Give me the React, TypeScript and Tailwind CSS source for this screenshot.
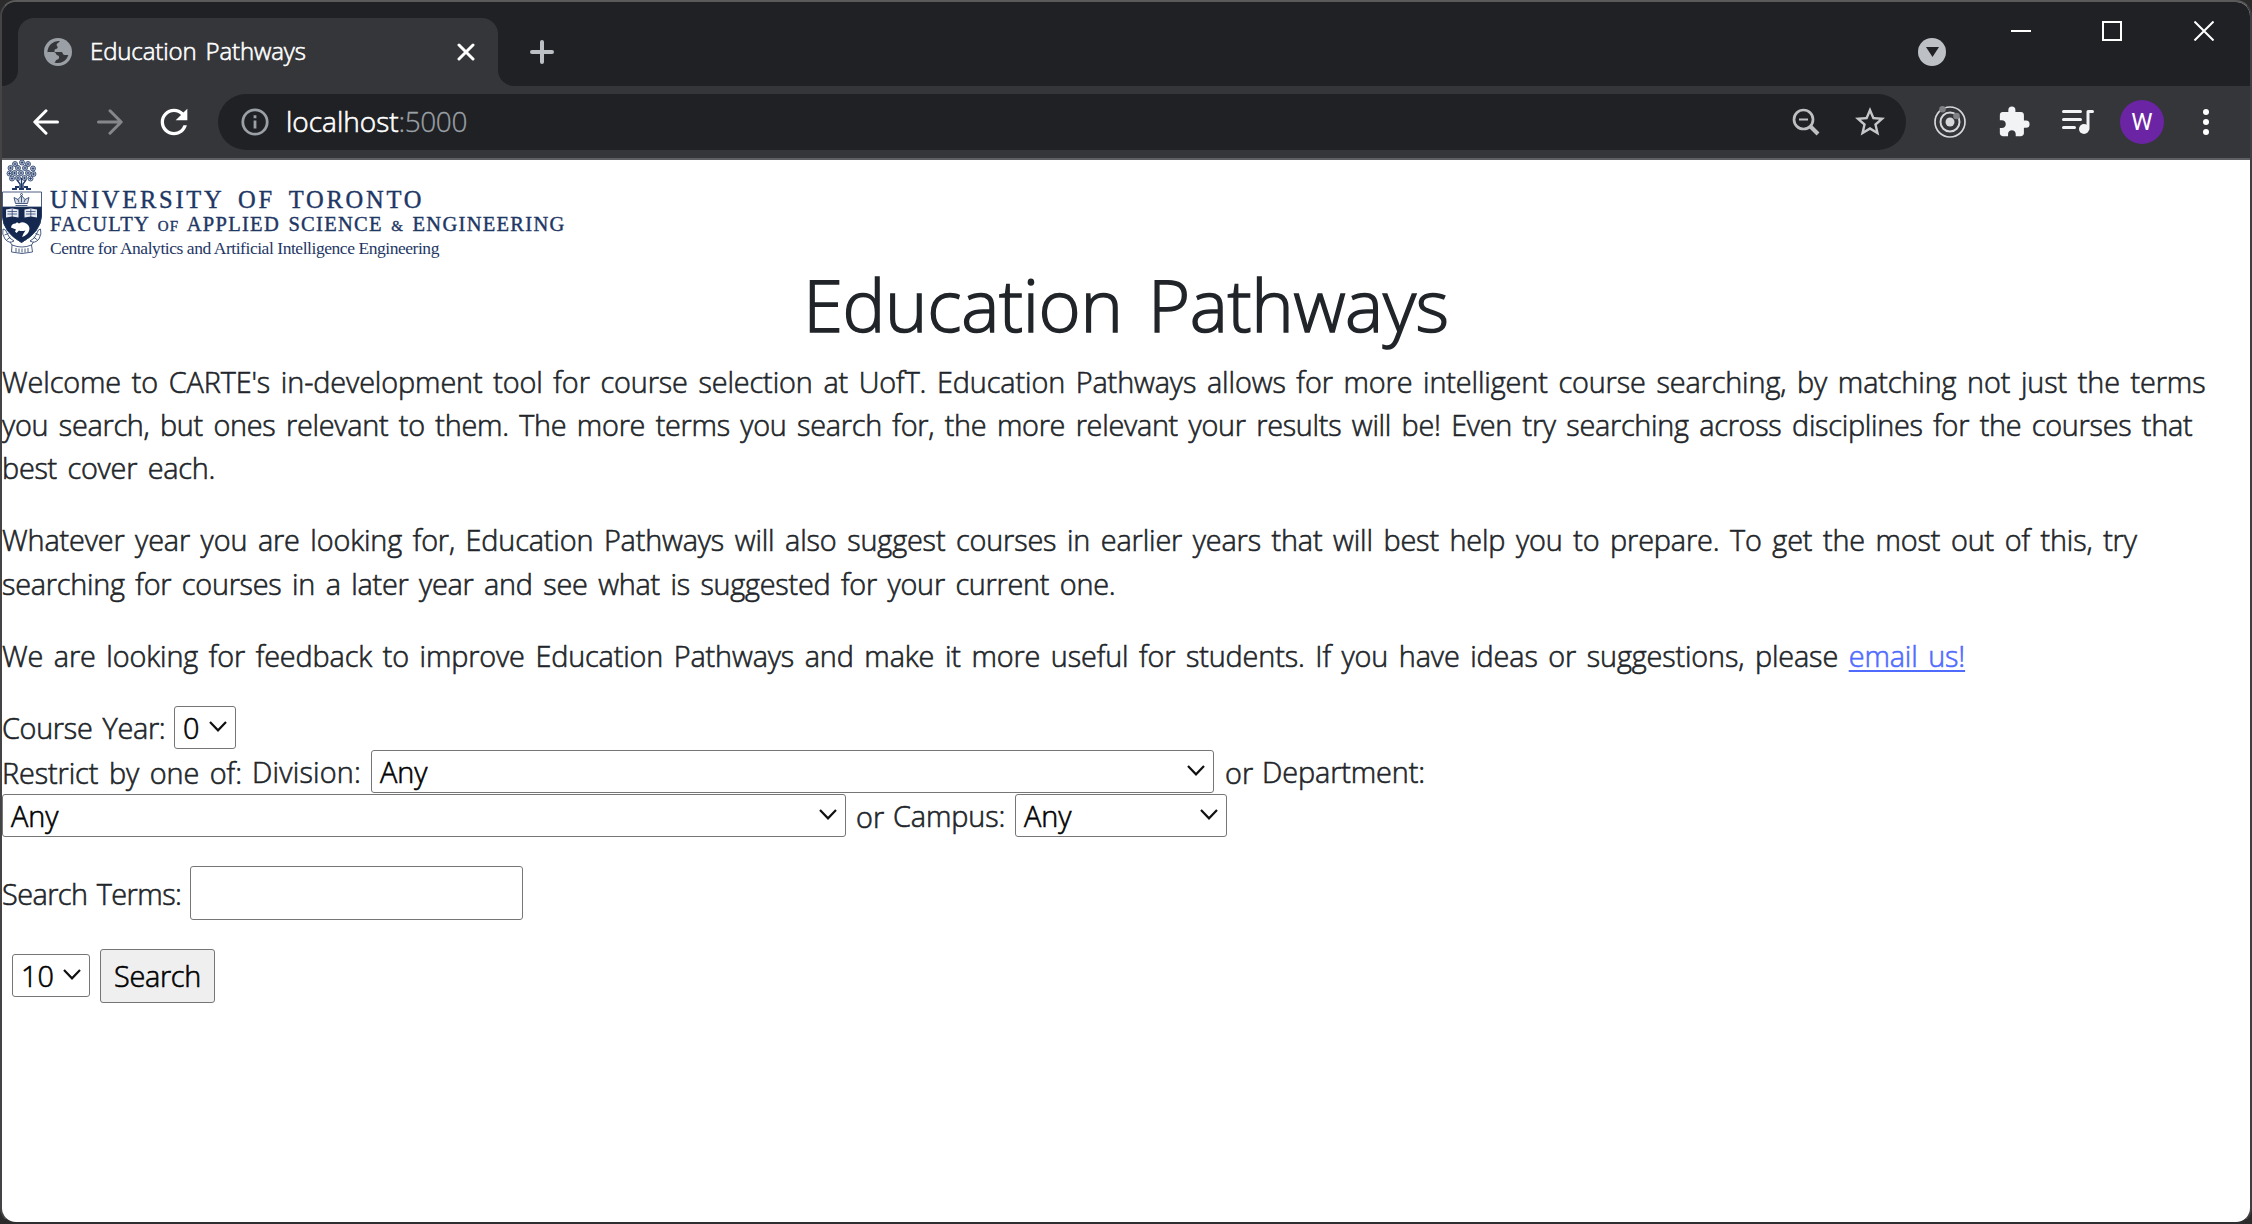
import React from "react";
import type { ReactNode } from "react";
import { MdExtension, MdRefresh, MdStarBorder } from "react-icons/md";

function Globe() {
  return (
    <svg viewBox="0 0 28 28" className="h-7 w-7">
      <circle cx="14" cy="14" r="14" fill="#9aa0a6" />
      <path d="M16 3.2C14.5 5 13 5 12.600 6.500C12.300 8 14.300 8.400 13.500 10C12.800 11.300 10.500 10.800 10.500 12.600V14H17.500C19 14 18.500 17 20.500 17H24.300A11 11 0 0 1 10.500 24.500V21.500C7.500 21.500 7 19.500 7 17.500L3.500 14A11 11 0 0 1 16 3.200Z" fill="#35363a" />
      <path d="M3.500 14H9.500C12.500 14 11.500 17 14 17.500C15.500 18 15.500 21 13.500 21.500C11.500 22 11.500 23.500 10.800 24.600A11 11 0 0 1 3.500 14Z" fill="#9aa0a6" />
    </svg>
  );
}

function Crest() {
  return (
    <svg viewBox="0 0 40 96" className="h-24 w-10 shrink-0" fill="none" stroke="#1e3765" strokeWidth="0.8">
      {[[20, 2.5], [13, 4], [26, 4], [8.500, 8], [31, 8.500], [16, 8], [23, 8], [7.500, 13.500], [31.500, 14], [12.500, 13], [19, 13], [26, 13], [10, 18.500], [28.500, 18.500], [16, 18], [22.500, 18]].map(([x, y]) => (
        <g key={`${x}-${y}`}>
          <circle cx={x} cy={y} r="2.500" fill="#c3cad9" />
          <path d={`M${x - 1.400} ${y}h2.800M${x} ${y - 1.400}v2.800`} />
        </g>
      ))}
      <path d="M19.500 18v10M15 20l3 4v4M24 20l-3 4v4" strokeWidth="1.300" />
      <path d="M10 29h5M17 29h5M24 29h5M13 27h4M22 27h4" strokeWidth="2" />
      <path d="M.5 32H39.500V56Q38.500 72 19.500 82.500Q1 72 .5 56Z" fill="#fff" />
      <path d="M.5 47H39.500V56Q38.500 72 19.500 82.500Q1 72 .5 56Z" fill="#14284f" />
      <path d="M13.500 43.500l-1.500-6 4 2 3.500-4 3.500 4 4-2-1.500 6zM13.500 45.500h12M16 39.500l1 3M19.500 36.500v6M23 39.500l-1 3" fill="#d5dae5" />
      <circle cx="19.500" cy="34.500" r="1" />
      <path d="M4 49.500l6-1 6.500 1v8l-6.500-1-6 1zM22.500 49.500l6.500-1 6 1v8l-6-1-6.500 1z" fill="#e4e8f0" stroke="none" />
      <path d="M10.200 49v8M28.800 49v8M5.500 51.500h9.500M5.500 54h9.500M24 51.500h9.500M24 54h9.500" strokeWidth="0.700" />
      <path d="M9 67.500Q9.500 63.500 13.500 63.500L15 62.200L17 63.500Q21 61 25 64Q28.500 67 27 71Q25.500 75 20 77L21.500 73.500L23.500 70.500Q19 71.500 17 70.500L14.500 73L13 71.500L14 69.500Z" fill="#fff" stroke="none" />
      <path d="M1 69Q-.5 74 3 79Q7 84 12 81M38.500 69Q40 74 37 79Q33 84 28 81M1 69Q4 69 5 73Q7 79 12 81M38.500 69Q36 69 35 73Q33 79 28 81M2.500 75l4-1.500M4.500 80l4-3M37.500 75l-4-1.500M35.500 80l-4-3M10 85Q20 89 29.500 85L30.500 92Q20 95 9.500 92ZM10 85L8 82M29.500 85L31.500 82M14 88v4M17 88.500v4M20 88.500v4M23 88.500v4M26 88v4" />
    </svg>
  );
}

function Select({ value, className }: { value: string; className: string }) {
  return (
    <div className={`flex h-[43px] shrink-0 items-start justify-between rounded-[3px] border border-[#767676] bg-white px-2 text-black ${className}`}>
      <span className="-mt-px">{value}</span>
      <svg viewBox="0 0 18 11" className="mt-[14px] h-[11px] w-[18px]" fill="none" stroke="#111" strokeWidth="2.200">
        <path d="M1 1l8 8.300L17 1" />
      </svg>
    </div>
  );
}

function Line({ children, className }: { children: ReactNode; className: string }) {
  return <span className={`block w-max whitespace-nowrap ${className}`}>{children}</span>;
}

function TabStrip() {
  return (
    <div className="flex h-[84px] shrink-0 items-start bg-[#202124]">
      <div className="h-[84px] w-4 shrink-0 bg-[#35363a]">
        <div className="h-full rounded-br-[16px] bg-[#202124]" />
      </div>
      <div className="mt-4 flex h-[68px] w-[480px] shrink-0 items-center rounded-t-[16px] bg-[#35363a] pr-[23px] pl-[26px]">
        <Globe />
        <span className="mb-[2px] ml-[18px] whitespace-nowrap text-[24px] text-white tracking-[-0.120px] [word-spacing:3px] [-webkit-text-stroke:0.6px]">Education Pathways</span>
        <svg viewBox="0 0 18 18" className="ml-auto h-[18px] w-[18px]" stroke="#fff" strokeWidth="3" strokeLinecap="round">
          <path d="M2 2l14 14M16 2L2 16" />
        </svg>
      </div>
      <div className="h-[84px] w-4 shrink-0 bg-[#35363a]">
        <div className="h-full rounded-bl-[16px] bg-[#202124]" />
      </div>
      <svg viewBox="0 0 24 24" className="mt-[38px] ml-4 h-6 w-6" stroke="#bdc1c6" strokeWidth="4" strokeLinecap="round">
        <path d="M12 2v20M2 12h20" />
      </svg>
      <div className="mt-9 ml-auto flex h-7 w-7 items-center justify-center rounded-full bg-[#bdc1c6]">
        <svg viewBox="0 0 13 10" className="h-[10px] w-[13px]" fill="#202124"><path d="M0 0h13L6.500 10z" /></svg>
      </div>
      <svg viewBox="0 0 20 20" className="mt-[19px] ml-[65px] h-5 w-5" stroke="#fff" strokeWidth="2"><path d="M0 10h20" /></svg>
      <svg viewBox="0 0 20 20" className="mt-[19px] ml-[71px] h-5 w-5" fill="none" stroke="#fff" strokeWidth="2"><path d="M1 1h18v18H1z" /></svg>
      <svg viewBox="0 0 20 20" className="mt-[19px] mr-9 ml-[72px] h-5 w-5" stroke="#fff" strokeWidth="2"><path d="M.5 .5l19 19M19.500 .5l-19 19" /></svg>
    </div>
  );
}

function Toolbar() {
  return (
    <div className="flex h-[74px] shrink-0 items-center border-b-2 border-[#5f6064] bg-[#35363a]">
      <svg viewBox="0 0 26 26" className="ml-[31px] h-[26px] w-[26px] shrink-0" fill="none" stroke="#fff" strokeWidth="3" strokeLinecap="round" strokeLinejoin="round">
        <path d="M24.500 13H2M13 1.800L1.800 13 13 24.200" />
      </svg>
      <svg viewBox="0 0 26 26" className="ml-[38px] h-[26px] w-[26px] shrink-0" fill="none" stroke="#86878a" strokeWidth="3" strokeLinecap="round" strokeLinejoin="round">
        <path d="M1.500 13H24M13 1.800L24.200 13 13 24.200" />
      </svg>
      <MdRefresh className="ml-[31px] h-10 w-10 shrink-0 text-white" />
      <div className="ml-[24px] flex h-14 w-[1688px] shrink-0 items-center rounded-full bg-[#202124] pr-[18px] pl-[23px]">
        <svg viewBox="0 0 28 28" className="h-7 w-7" fill="none" stroke="#9aa0a6" strokeWidth="2.800">
          <circle cx="14" cy="14" r="12.200" />
          <path d="M14 12.500v8M14 7.200v3" />
        </svg>
        <span className="mb-[2px] ml-[17px] whitespace-nowrap text-[28px] leading-none text-white [-webkit-text-stroke:0.6px]">
          <span>localhost</span>
          <span className="text-[#9aa0a6] tracking-[-0.450px] [-webkit-text-stroke:0.3px]">:5000</span>
        </span>
        <svg viewBox="0 0 28 28" className="ml-auto h-7 w-7" fill="none" stroke="#bdbfc1" strokeWidth="2.700">
          <circle cx="11.500" cy="11.500" r="9.500" />
          <path d="M18.500 18.500l7.500 7.500" strokeWidth="4" />
          <path d="M7 11.500h9" strokeWidth="2" />
        </svg>
        <MdStarBorder className="ml-[32px] h-9 w-9 text-[#c4c6c8]" />
      </div>
      <svg viewBox="0 0 32 32" className="ml-7 h-8 w-8 shrink-0" fill="none" stroke="#d6d7d8" strokeWidth="1.700">
        <circle cx="16" cy="16" r="15" />
        <circle cx="16" cy="16" r="9.500" strokeWidth="2" />
        <circle cx="16" cy="16" r="4.500" fill="#d6d7d8" stroke="none" />
        <circle cx="8.500" cy="3.300" r="3.300" fill="#808184" stroke="none" />
        <circle cx="22.500" cy="10" r="3.300" fill="#808184" stroke="none" />
      </svg>
      <MdExtension className="ml-[31px] h-[34px] w-[34px] shrink-0 text-[#f1f3f4]" />
      <svg viewBox="0 0 32 26" className="ml-[31px] h-[26px] w-8 shrink-0" fill="none" stroke="#f1f3f4" strokeWidth="3" strokeLinecap="round">
        <path d="M1.500 2.500h17M1.500 10.500h17M1.500 18.500h11" />
        <path d="M26 20V2.500h4.500" strokeLinejoin="round" />
        <circle cx="22" cy="20" r="5" fill="#f1f3f4" stroke="none" />
      </svg>
      <div className="ml-[26px] flex h-11 w-11 shrink-0 items-center justify-center rounded-full bg-[#6b24a3] font-['Roboto'] text-[24px] leading-none font-normal text-white [-webkit-text-stroke:0]">W</div>
      <svg viewBox="0 0 6 26" className="ml-[39px] h-[26px] w-[6px] shrink-0" fill="#fff">
        <circle cx="3" cy="3" r="3" /><circle cx="3" cy="13" r="3" /><circle cx="3" cy="23" r="3" />
      </svg>
    </div>
  );
}

export default function App() {
  return (
    <div className="h-[1224px] w-[2252px] bg-[#2b2b2c] font-['Open_Sans',sans-serif] font-light [-webkit-text-stroke:0.6px]">
      <div className="flex h-[1224px] flex-col overflow-hidden rounded-[16px] border-2 border-t-[#5a5a5a] border-r-[#3f3f43] border-b-[#2e2e30] border-l-[#444446] bg-white">
        <TabStrip />
        <Toolbar />
        <main className="text-[28.800px] leading-[43.200px] text-[#212529]">
          <div className="flex h-[101px] overflow-hidden">
            <Crest />
            <div className="ml-[8px] font-['Liberation_Serif',serif] font-normal whitespace-nowrap text-[#1e3765] [-webkit-text-stroke:0.4px]">
              <div className="mt-[26px] h-7 w-max text-[24.500px] leading-7 tracking-[2.750px] [word-spacing:5.500px]">UNIVERSITY OF TORONTO</div>
              <div className="-mt-[2px] h-6 w-max text-[20.500px] leading-6 tracking-[1.280px] [word-spacing:2px]">
                FACULTY <span className="text-[15px]">OF</span> APPLIED SCIENCE <span className="text-[15px]">&amp;</span> ENGINEERING
              </div>
              <div className="h-6 w-max text-[17.500px] leading-6 tracking-[-0.450px] [-webkit-text-stroke:0]">Centre for Analytics and Artificial Intelligence Engineering</div>
            </div>
          </div>
          <h1 className="mb-3 flex h-[87px] justify-center text-[72px] leading-[86.400px] [-webkit-text-stroke:1.500px]">
            <span className="tracking-[-0.350px] [word-spacing:7px]">Education Pathways</span>
          </h1>
          <p className="mb-[28.800px]">
            <Line className="tracking-[-0.110px] [word-spacing:3.300px]">Welcome to CARTE's in-development tool for course selection at UofT. Education Pathways allows for more intelligent course searching, by matching not just the terms</Line>
            <Line className="tracking-[-0.270px] [word-spacing:3.300px]">you search, but ones relevant to them. The more terms you search for, the more relevant your results will be! Even try searching across disciplines for the courses that</Line>
            <Line className="tracking-[-0.250px] [word-spacing:3.300px]">best cover each.</Line>
          </p>
          <p className="mb-[28.800px]">
            <Line className="tracking-[-0.150px] [word-spacing:3.300px]">Whatever year you are looking for, Education Pathways will also suggest courses in earlier years that will best help you to prepare. To get the most out of this, try</Line>
            <Line className="tracking-[-0.240px] [word-spacing:3.300px]">searching for courses in a later year and see what is suggested for your current one.</Line>
          </p>
          <p className="mb-[29.200px]">
            <Line className="tracking-[-0.140px] [word-spacing:3.300px]">
              We are looking for feedback to improve Education Pathways and make it more useful for students. If you have ideas or suggestions, please{" "}
              <a href="#email" className="text-[#4f6bff] tracking-0 underline decoration-2 underline-offset-[3px]">email us!</a>
            </Line>
          </p>
          <div className="flex h-11 whitespace-nowrap">
            <label className="w-[172px] shrink-0"><Line className="tracking-[-0.300px] [word-spacing:3px]">Course Year:</Line></label>
            <Select value="0" className="w-[62px]" />
          </div>
          <div className="flex h-11 whitespace-nowrap">
            <label className="w-[250px] shrink-0 pt-px"><Line className="tracking-[-0.100px] [word-spacing:3.300px]">Restrict by one of:</Line></label>
            <label className="w-[119px] shrink-0"><Line className="tracking-[0.200px]">Division:</Line></label>
            <Select value="Any" className="w-[843px]" />
            <span className="ml-[11px] w-[37px] shrink-0 pt-px">or</span>
            <label><Line className="tracking-[-0.100px]">Department:</Line></label>
          </div>
          <div className="flex h-11 whitespace-nowrap">
            <Select value="Any" className="w-[844px]" />
            <span className="ml-[10px] w-[37px] shrink-0 pt-px">or</span>
            <label className="w-[122px] shrink-0"><Line className="tracking-[-0.100px]">Campus:</Line></label>
            <Select value="Any" className="w-[212px]" />
          </div>
          <div className="mt-7 flex h-[54px] whitespace-nowrap">
            <label className="w-[188px] shrink-0 pt-[6px]"><Line className="tracking-[-0.550px] [word-spacing:2.500px]">Search Terms:</Line></label>
            <input className="h-[54px] w-[333px] rounded-[3px] border border-[#767676] bg-white" />
          </div>
          <div className="mt-[29px] flex h-[54px] items-start">
            <Select value="10" className="mt-[5px] ml-[10px] w-[78px]" />
            <button className="ml-[10px] h-[54px] w-[115px] rounded-[3px] border border-[#767676] bg-[#efefef] pb-px text-black tracking-[-0.300px]">Search</button>
          </div>
        </main>
      </div>
    </div>
  );
}
